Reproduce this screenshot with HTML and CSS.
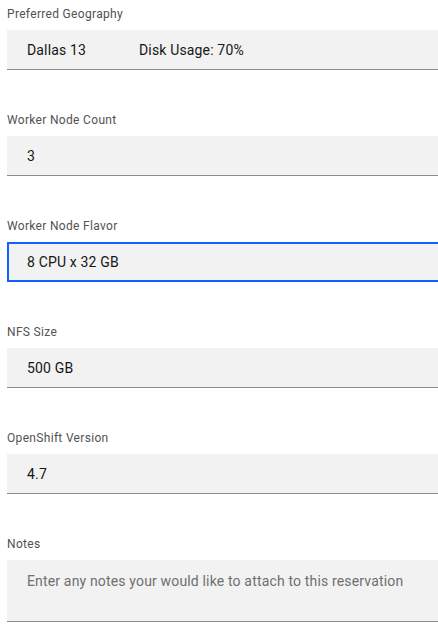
FILE: index.html
```html
<!DOCTYPE html>
<html>
<head>
<meta charset="utf-8">
<link rel="stylesheet" href="styles.css">
</head>
<body>
<form class="form">
  <div class="group">
    <div class="label">Preferred Geography</div>
    <div class="field"><span class="geo">Dallas 13</span><span>Disk Usage: 70%</span></div>
  </div>
  <div class="group">
    <div class="label">Worker Node Count</div>
    <div class="field">3</div>
  </div>
  <div class="group">
    <div class="label">Worker Node Flavor</div>
    <div class="field focused">8 CPU x 32 GB</div>
  </div>
  <div class="group">
    <div class="label">NFS Size</div>
    <div class="field">500 GB</div>
  </div>
  <div class="group">
    <div class="label">OpenShift Version</div>
    <div class="field">4.7</div>
  </div>
  <div class="group">
    <div class="label">Notes</div>
    <div class="field area"><span class="placeholder">Enter any notes your would like to attach to this reservation</span></div>
  </div>
</form>
</body>
</html>
```
FILE: styles.css
```css
html, body {
  margin: 0;
  padding: 0;
  background: #ffffff;
  overflow: hidden;
}
body {
  font-family: Roboto, "Liberation Sans", sans-serif;
  color: #161616;
}
.form {
  display: flex;
  flex-direction: column;
  gap: 42px;
  padding: 6px 0 0 7px;
}
.group {
  display: flex;
  flex-direction: column;
  gap: 8px;
  overflow: hidden;
}
.label {
  font-size: 12px;
  line-height: 16px;
  color: #525252;
  letter-spacing: 0.32px;
}
.field {
  box-sizing: border-box;
  width: calc(100% + 12px);
  height: 40px;
  flex: none;
  background: #f2f2f2;
  border-bottom: 1px solid #8d8d8d;
  padding: 0 20px;
  display: flex;
  align-items: center;
  font-size: 14px;
  line-height: 18px;
  letter-spacing: 0.16px;
  white-space: nowrap;
}
.geo {
  width: 112px;
}
.focused {
  outline: 2px solid #0f62fe;
  outline-offset: -2px;
}
.area {
  height: 62px;
  align-items: flex-start;
  padding-top: 12px;
}
.placeholder {
  color: #6f6f6f;
}
```
